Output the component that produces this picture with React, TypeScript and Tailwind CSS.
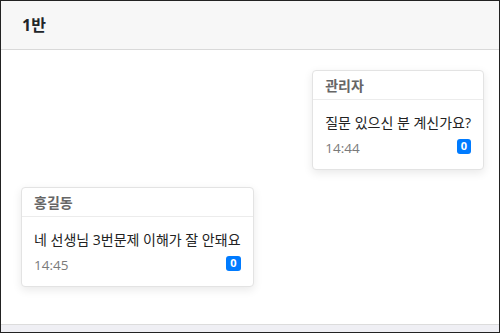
const font = { fontFamily: '"Open Sans", "Noto Sans CJK KR", sans-serif' };

type Msg = { name: string; text: string; time: string; count: number; mine?: boolean };

const messages: Msg[] = [
  { name: '관리자', text: '질문 있으신 분 계신가요?', time: '14:44', count: 0, mine: true },
  { name: '홍길동', text: '네 선생님 3번문제 이해가 잘 안돼요', time: '14:45', count: 0 },
];

function Bubble({ m }: { m: Msg }) {
  return (
    <div
      className={`flex flex-col rounded-[4px] border border-[#e3e3e3] bg-white shadow-[0_3px_10px_rgba(0,0,0,0.09)] ${
        m.mine ? 'self-end' : 'self-start'
      }`}
    >
      <div className="flex h-[29px] items-center border-b border-[#ececec] px-3 text-[14px] font-bold text-[#666]">
        {m.name}
      </div>
      <div className="flex flex-col px-3 pt-[13px] pb-[11px]">
        <div className="text-[14px] leading-[20px] text-[#222]">{m.text}</div>
        <div className="mt-[5px] flex items-center justify-between">
          <span className="text-[13.5px] leading-[20px] text-[#7a7a7a]">{m.time}</span>
          <span className="mb-[4px] flex h-[15px] min-w-[14px] items-center justify-center rounded-[3px] bg-[#007bff] px-1 text-[11px] font-bold text-white">
            {m.count}
          </span>
        </div>
      </div>
    </div>
  );
}

export default function App() {
  return (
    <div className="flex h-[333px] w-[500px] flex-col border border-[#222] bg-white" style={font}>
      <div className="flex h-[49px] shrink-0 items-center border-b border-[#d9d9d9] bg-[#f7f7f7] px-[21px] text-[16px] font-bold text-[#212529]">
        1반
      </div>
      <div className="flex flex-1 flex-col gap-[17px] pt-5 pr-[15px] pl-5">
        {messages.map((m, i) => (
          <Bubble key={i} m={m} />
        ))}
      </div>
      <div className="h-[8px] shrink-0 border-t border-[#dcdcdc] bg-[#efeff4]" />
    </div>
  );
}
